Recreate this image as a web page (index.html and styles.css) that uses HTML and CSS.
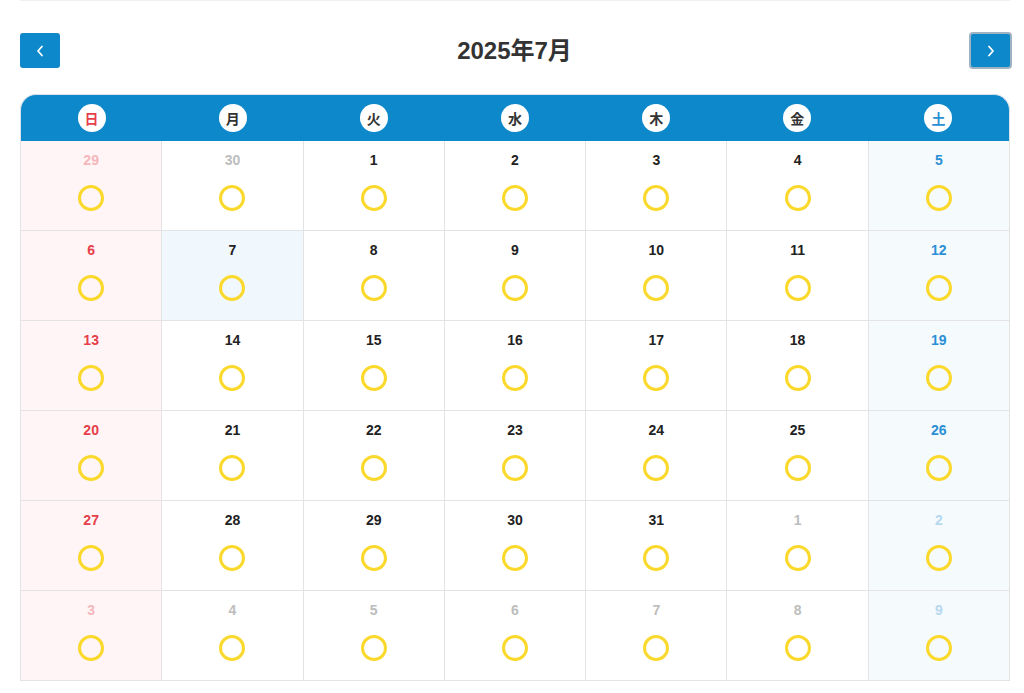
FILE: index.html
```html
<!DOCTYPE html>
<html lang="ja">
<head>
<meta charset="utf-8">
<title>2025年7月</title>
<link rel="stylesheet" href="styles.css">
</head>
<body>
<div class="page">
  <div class="topline"></div>
  <div class="nav">
    <button class="navbtn prev" aria-label="前の月"><svg width="8" height="12" viewBox="0 0 8 12"><polyline points="6,1.5 2,6 6,10.5" fill="none" stroke="#fff" stroke-width="1.8" stroke-linecap="round" stroke-linejoin="round"/></svg></button>
    <h1 class="title">2025年7月</h1>
    <button class="navbtn next focused" aria-label="次の月"><svg width="8" height="12" viewBox="0 0 8 12"><polyline points="2,1.5 6,6 2,10.5" fill="none" stroke="#fff" stroke-width="1.8" stroke-linecap="round" stroke-linejoin="round"/></svg></button>
  </div>
  <div class="cal">
    <div class="head">
      <div class="hcell"><span class="badge sun">日</span></div>
      <div class="hcell"><span class="badge">月</span></div>
      <div class="hcell"><span class="badge">火</span></div>
      <div class="hcell"><span class="badge">水</span></div>
      <div class="hcell"><span class="badge">木</span></div>
      <div class="hcell"><span class="badge">金</span></div>
      <div class="hcell"><span class="badge sat">土</span></div>
    </div>
    <div class="grid">
      <div class="cell sun other"><span class="num">29</span><span class="mark"></span></div>
      <div class="cell other"><span class="num">30</span><span class="mark"></span></div>
      <div class="cell"><span class="num">1</span><span class="mark"></span></div>
      <div class="cell"><span class="num">2</span><span class="mark"></span></div>
      <div class="cell"><span class="num">3</span><span class="mark"></span></div>
      <div class="cell"><span class="num">4</span><span class="mark"></span></div>
      <div class="cell sat"><span class="num">5</span><span class="mark"></span></div>

      <div class="cell sun"><span class="num">6</span><span class="mark"></span></div>
      <div class="cell today"><span class="num">7</span><span class="mark"></span></div>
      <div class="cell"><span class="num">8</span><span class="mark"></span></div>
      <div class="cell"><span class="num">9</span><span class="mark"></span></div>
      <div class="cell"><span class="num">10</span><span class="mark"></span></div>
      <div class="cell"><span class="num">11</span><span class="mark"></span></div>
      <div class="cell sat"><span class="num">12</span><span class="mark"></span></div>

      <div class="cell sun"><span class="num">13</span><span class="mark"></span></div>
      <div class="cell"><span class="num">14</span><span class="mark"></span></div>
      <div class="cell"><span class="num">15</span><span class="mark"></span></div>
      <div class="cell"><span class="num">16</span><span class="mark"></span></div>
      <div class="cell"><span class="num">17</span><span class="mark"></span></div>
      <div class="cell"><span class="num">18</span><span class="mark"></span></div>
      <div class="cell sat"><span class="num">19</span><span class="mark"></span></div>

      <div class="cell sun"><span class="num">20</span><span class="mark"></span></div>
      <div class="cell"><span class="num">21</span><span class="mark"></span></div>
      <div class="cell"><span class="num">22</span><span class="mark"></span></div>
      <div class="cell"><span class="num">23</span><span class="mark"></span></div>
      <div class="cell"><span class="num">24</span><span class="mark"></span></div>
      <div class="cell"><span class="num">25</span><span class="mark"></span></div>
      <div class="cell sat"><span class="num">26</span><span class="mark"></span></div>

      <div class="cell sun"><span class="num">27</span><span class="mark"></span></div>
      <div class="cell"><span class="num">28</span><span class="mark"></span></div>
      <div class="cell"><span class="num">29</span><span class="mark"></span></div>
      <div class="cell"><span class="num">30</span><span class="mark"></span></div>
      <div class="cell"><span class="num">31</span><span class="mark"></span></div>
      <div class="cell other"><span class="num">1</span><span class="mark"></span></div>
      <div class="cell sat other"><span class="num">2</span><span class="mark"></span></div>

      <div class="cell sun other"><span class="num">3</span><span class="mark"></span></div>
      <div class="cell other"><span class="num">4</span><span class="mark"></span></div>
      <div class="cell other"><span class="num">5</span><span class="mark"></span></div>
      <div class="cell other"><span class="num">6</span><span class="mark"></span></div>
      <div class="cell other"><span class="num">7</span><span class="mark"></span></div>
      <div class="cell other"><span class="num">8</span><span class="mark"></span></div>
      <div class="cell sat other"><span class="num">9</span><span class="mark"></span></div>
    </div>
  </div>
</div>
</body>
</html>
```
FILE: styles.css
```css
* { box-sizing: border-box; }
html, body { margin: 0; padding: 0; background: #fff; }
body {
  font-family: "Liberation Sans", "Noto Sans CJK JP", Arial, sans-serif;
  color: #333;
}
.page {
  width: 992px;
  margin-left: 20px;
}
.topline {
  height: 1px;
  width: 990px;
  background: #f0f0f0;
}
.nav {
  display: flex;
  align-items: center;
  justify-content: space-between;
  height: 37px;
  margin-top: 31px;
}
.navbtn {
  width: 40px;
  height: 35px;
  border: 0;
  border-radius: 3px;
  background: #0d88cb;
  display: flex;
  align-items: center;
  justify-content: center;
  padding: 0;
  margin: 0;
}
.navbtn.focused {
  width: 43px;
  height: 37px;
  border: 2px solid #9fb3c2;
  border-radius: 4px;
}
.title {
  margin: 1px 0 0;
  font-size: 24px;
  line-height: 28px;
  font-weight: bold;
  color: #333;
  letter-spacing: 0;
}
.cal {
  width: 990px;
  margin-top: 25px;
}
.head {
  display: grid;
  grid-template-columns: repeat(7, 1fr);
  height: 47px;
  background: #0d88cb;
  border-radius: 16px 16px 0 0;
  border: 1px solid #d8e2ea;
  border-bottom: 0;
}
.hcell {
  display: flex;
  align-items: center;
  justify-content: center;
}
.badge {
  width: 28px;
  height: 28px;
  border-radius: 50%;
  background: #fff;
  display: flex;
  align-items: center;
  justify-content: center;
  font-size: 14px;
  font-weight: bold;
  color: #333;
}
.badge.sun { color: #e63e4b; }
.badge.sat { color: #2b8fd5; }
.grid {
  display: grid;
  grid-template-columns: repeat(7, 1fr);
  grid-auto-rows: 90px;
  border-left: 1px solid #e3e3e3;
}
.cell {
  border-right: 1px solid #e3e3e3;
  border-bottom: 1px solid #e3e3e3;
  display: flex;
  flex-direction: column;
  align-items: center;
  padding-top: 9px;
  background: #fff;
}
.num {
  font-size: 14px;
  font-weight: bold;
  line-height: 20px;
  height: 20px;
  color: #222;
}
.mark {
  width: 26px;
  height: 26px;
  margin-top: 15px;
  border: 3px solid #fbd92c;
  border-radius: 50%;
}
.cell.sun { background: #fff5f6; }
.cell.sun .num { color: #e63e4b; }
.cell.sat { background: #f5fafd; }
.cell.sat .num { color: #2b8fd5; }
.cell.today { background: #f1f8fd; }
.cell.other .num { color: #bdbdbd; }
.cell.sun.other .num { color: #f5b7bc; }
.cell.sat.other .num { color: #b6d8f0; }
```
